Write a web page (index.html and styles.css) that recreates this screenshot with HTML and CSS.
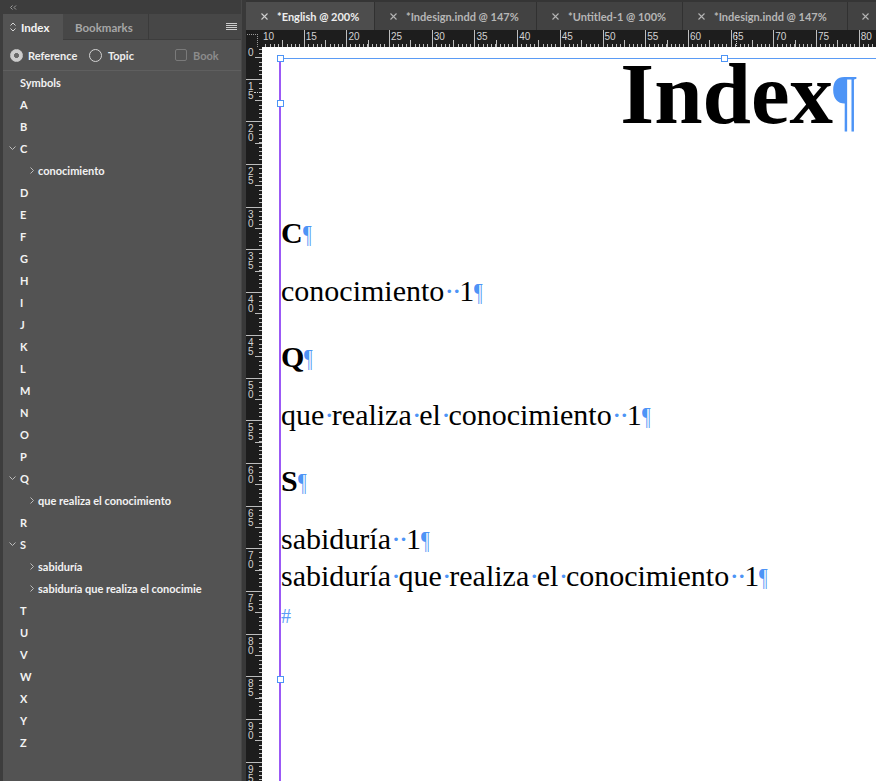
FILE: index.html
```html
<!DOCTYPE html>
<html>
<head>
<meta charset="utf-8">
<title>Index</title>
<link rel="stylesheet" href="styles.css">
</head>
<body>
<div class="app">
  <aside class="panel">
    <div class="panel-top">
      <svg class="collapse" width="8" height="5" viewBox="0 0 8 5"><path d="M3.5 0.5 L1.5 2.5 L3.5 4.5 M7 0.5 L5 2.5 L7 4.5" fill="none" stroke="#9c9c9c" stroke-width="1"/></svg>
    </div>
    <div class="panel-tabs">
      <div class="ptab active">
        <svg width="6" height="10" viewBox="0 0 6 10"><path d="M0.5 3.5 L3 1 L5.5 3.5 M0.5 6.5 L3 9 L5.5 6.5" fill="none" stroke="#d6d6d6" stroke-width="1"/></svg>
        <span>Index</span>
      </div>
      <div class="ptab bm">Bookmarks</div>
      <div class="ptab-fill">
        <svg width="11" height="8" viewBox="0 0 11 8"><path d="M0 0.5 H11 M0 2.5 H11 M0 4.5 H11 M0 6.5 H11" stroke="#cdcdcd" stroke-width="1"/></svg>
      </div>
    </div>
    <div class="radio-row">
      <div class="opt ref"><span class="radio on"></span><span>Reference</span></div>
      <div class="opt topic"><span class="radio"></span><span>Topic</span></div>
      <div class="opt book"><span class="cbox"></span><span>Book</span></div>
    </div>
    <ul class="tree">
      <li class="l1"><span class="tw"></span>Symbols</li>
      <li class="l1"><span class="tw"></span>A</li>
      <li class="l1"><span class="tw"></span>B</li>
      <li class="l1"><span class="tw"><svg width="7" height="4" viewBox="0 0 7 4"><path d="M0.5 0.5 L3.5 3.5 L6.5 0.5" fill="none" stroke="#bdbdbd"/></svg></span>C</li>
      <li class="l2"><span class="tw"><svg width="4" height="7" viewBox="0 0 4 7"><path d="M0.5 0.5 L3.5 3.5 L0.5 6.5" fill="none" stroke="#bdbdbd"/></svg></span>conocimiento</li>
      <li class="l1"><span class="tw"></span>D</li>
      <li class="l1"><span class="tw"></span>E</li>
      <li class="l1"><span class="tw"></span>F</li>
      <li class="l1"><span class="tw"></span>G</li>
      <li class="l1"><span class="tw"></span>H</li>
      <li class="l1"><span class="tw"></span>I</li>
      <li class="l1"><span class="tw"></span>J</li>
      <li class="l1"><span class="tw"></span>K</li>
      <li class="l1"><span class="tw"></span>L</li>
      <li class="l1"><span class="tw"></span>M</li>
      <li class="l1"><span class="tw"></span>N</li>
      <li class="l1"><span class="tw"></span>O</li>
      <li class="l1"><span class="tw"></span>P</li>
      <li class="l1"><span class="tw"><svg width="7" height="4" viewBox="0 0 7 4"><path d="M0.5 0.5 L3.5 3.5 L6.5 0.5" fill="none" stroke="#bdbdbd"/></svg></span>Q</li>
      <li class="l2"><span class="tw"><svg width="4" height="7" viewBox="0 0 4 7"><path d="M0.5 0.5 L3.5 3.5 L0.5 6.5" fill="none" stroke="#bdbdbd"/></svg></span>que realiza el conocimiento</li>
      <li class="l1"><span class="tw"></span>R</li>
      <li class="l1"><span class="tw"><svg width="7" height="4" viewBox="0 0 7 4"><path d="M0.5 0.5 L3.5 3.5 L6.5 0.5" fill="none" stroke="#bdbdbd"/></svg></span>S</li>
      <li class="l2"><span class="tw"><svg width="4" height="7" viewBox="0 0 4 7"><path d="M0.5 0.5 L3.5 3.5 L0.5 6.5" fill="none" stroke="#bdbdbd"/></svg></span>sabiduría</li>
      <li class="l2"><span class="tw"><svg width="4" height="7" viewBox="0 0 4 7"><path d="M0.5 0.5 L3.5 3.5 L0.5 6.5" fill="none" stroke="#bdbdbd"/></svg></span>sabiduría que realiza el conocimie</li>
      <li class="l1"><span class="tw"></span>T</li>
      <li class="l1"><span class="tw"></span>U</li>
      <li class="l1"><span class="tw"></span>V</li>
      <li class="l1"><span class="tw"></span>W</li>
      <li class="l1"><span class="tw"></span>X</li>
      <li class="l1"><span class="tw"></span>Y</li>
      <li class="l1"><span class="tw"></span>Z</li>
    </ul>
  </aside>

  <main class="main">
    <nav class="doctabs">
      <div class="dtab active w1"><svg class="x" width="7" height="7" viewBox="0 0 7 7"><path d="M0.5 0.5 L6.5 6.5 M6.5 0.5 L0.5 6.5" stroke="#cfcfcf" stroke-width="1.1"/></svg><span>*English @ 200%</span></div>
      <div class="dtab w2"><svg class="x" width="7" height="7" viewBox="0 0 7 7"><path d="M0.5 0.5 L6.5 6.5 M6.5 0.5 L0.5 6.5" stroke="#b5b5b5" stroke-width="1.1"/></svg><span>*Indesign.indd @ 147%</span></div>
      <div class="dtab w3"><svg class="x" width="7" height="7" viewBox="0 0 7 7"><path d="M0.5 0.5 L6.5 6.5 M6.5 0.5 L0.5 6.5" stroke="#b5b5b5" stroke-width="1.1"/></svg><span>*Untitled-1 @ 100%</span></div>
      <div class="dtab w4"><svg class="x" width="7" height="7" viewBox="0 0 7 7"><path d="M0.5 0.5 L6.5 6.5 M6.5 0.5 L0.5 6.5" stroke="#b5b5b5" stroke-width="1.1"/></svg><span>*Indesign.indd @ 147%</span></div>
      <div class="dtab w5"><svg class="x" width="7" height="7" viewBox="0 0 7 7"><path d="M0.5 0.5 L6.5 6.5 M6.5 0.5 L0.5 6.5" stroke="#b5b5b5" stroke-width="1.1"/></svg></div>
    </nav>

    <div class="workspace">
      <div class="corner">
        <svg width="16" height="17" viewBox="0 0 16 17"><path d="M1 4.5 H12 M11.5 4 V17" fill="none" stroke="#9a9a9a" stroke-width="1" stroke-dasharray="1 1"/></svg>
      </div>
      <div class="hruler">
        <div class="hr-cell">10</div>
        <div class="hr-cell">15</div>
        <div class="hr-cell">20</div>
        <div class="hr-cell">25</div>
        <div class="hr-cell">30</div>
        <div class="hr-cell">35</div>
        <div class="hr-cell">40</div>
        <div class="hr-cell">45</div>
        <div class="hr-cell">50</div>
        <div class="hr-cell">55</div>
        <div class="hr-cell">60</div>
        <div class="hr-cell">65</div>
        <div class="hr-cell">70</div>
        <div class="hr-cell">75</div>
        <div class="hr-cell">80</div>
        <span class="cursor-v"></span>
      </div>
      <div class="vruler">
        <div class="vr-cell"><span>1</span><span>0</span></div>
        <div class="vr-cell"><span>1</span><span>5</span></div>
        <div class="vr-cell"><span>2</span><span>0</span></div>
        <div class="vr-cell"><span>2</span><span>5</span></div>
        <div class="vr-cell"><span>3</span><span>0</span></div>
        <div class="vr-cell"><span>3</span><span>5</span></div>
        <div class="vr-cell"><span>4</span><span>0</span></div>
        <div class="vr-cell"><span>4</span><span>5</span></div>
        <div class="vr-cell"><span>5</span><span>0</span></div>
        <div class="vr-cell"><span>5</span><span>5</span></div>
        <div class="vr-cell"><span>6</span><span>0</span></div>
        <div class="vr-cell"><span>6</span><span>5</span></div>
        <div class="vr-cell"><span>7</span><span>0</span></div>
        <div class="vr-cell"><span>7</span><span>5</span></div>
        <div class="vr-cell"><span>8</span><span>0</span></div>
        <div class="vr-cell"><span>8</span><span>5</span></div>
        <div class="vr-cell"><span>9</span><span>0</span></div>
        <div class="vr-cell"><span>9</span><span>5</span></div>
        <span class="cursor-h"></span>
      </div>
      <div class="page">
        <div class="frame">
          <p class="title">Index<span class="pc">¶</span></p>
          <p class="letter">C<span class="pc">¶</span></p>
          <p class="entry">conocimiento<span class="sp">·</span><span class="sp">·</span>1<span class="pc">¶</span></p>
          <p class="letter">Q<span class="pc">¶</span></p>
          <p class="entry">que<span class="sp">·</span>realiza<span class="sp">·</span>el<span class="sp">·</span>conocimiento<span class="sp">·</span><span class="sp">·</span>1<span class="pc">¶</span></p>
          <p class="letter">S<span class="pc">¶</span></p>
          <p class="entry">sabiduría<span class="sp">·</span><span class="sp">·</span>1<span class="pc">¶</span></p>
          <p class="entry">sabiduría<span class="sp">·</span>que<span class="sp">·</span>realiza<span class="sp">·</span>el<span class="sp">·</span>conocimiento<span class="sp">·</span><span class="sp">·</span>1<span class="pc">¶</span></p>
          <p class="entry"><span class="eos">#</span></p>
        </div>
        <span class="handle h1"></span>
        <span class="handle h2"></span>
        <span class="handle h3"></span>
        <span class="handle h4"></span>
      </div>
    </div>
  </main>
</div>
</body>
</html>
```

FILE: styles.css
```css
* { box-sizing: border-box; }
html, body { margin: 0; padding: 0; }
body {
  width: 876px;
  height: 781px;
  overflow: hidden;
  background: #393939;
  font-family: Lato, "Noto Sans", "Liberation Sans", sans-serif;
}
.app { display: flex; height: 781px; }

/* ---------- left panel ---------- */
.panel {
  width: 242px;
  flex: none;
  display: flex;
  flex-direction: column;
  background: #535353;
  border-left: 3px solid #3d3d3d;
  border-right: 1px solid #474747;
}
.panel-top {
  height: 14px;
  margin-left: -3px;
  background: #3d3d3d;
  display: flex;
  align-items: center;
  padding-left: 9px;
}
.panel-tabs {
  height: 26px;
  display: flex;
  background: #474747;
}
.ptab {
  display: flex;
  align-items: center;
  font-size: 11.5px;
  font-weight: 700;
  color: #a6a6a6;
  box-shadow: inset 0 -1px #3d3d3d;
  white-space: nowrap;
}
.ptab.active {
  width: 60px;
  padding-left: 7px;
  gap: 5px;
  background: #535353;
  color: #f4f4f4;
  box-shadow: none;
}
.ptab.bm {
  width: 86px;
  padding-left: 12px;
  border-right: 1px solid #3b3b3b;
}
.ptab-fill {
  flex: 1;
  display: flex;
  justify-content: flex-end;
  align-items: center;
  padding-right: 4px;
  padding-bottom: 1px;
  box-shadow: inset 0 -1px #3d3d3d;
}
.radio-row {
  height: 31px;
  display: flex;
  align-items: center;
  padding-left: 7px;
  border-bottom: 1px solid #5f5f5f;
  font-size: 11px;
  font-weight: 700;
  color: #eeeeee;
}
.opt { display: flex; align-items: center; gap: 5px; white-space: nowrap; }
.opt.ref { width: 79px; }
.opt.topic { width: 86px; gap: 6px; }
.opt.book { color: #8c8c8c; gap: 6px; }
.radio {
  width: 13px;
  height: 13px;
  border-radius: 50%;
  border: 1px solid #d4d4d4;
}
.radio.on {
  border-color: #c9c9c9;
  background: radial-gradient(circle, #6a6a6a 0 2.2px, #cdcdcd 2.8px);
}
.cbox {
  width: 12px;
  height: 12px;
  border: 1px solid #7a7a7a;
  border-radius: 2px;
}
.tree {
  list-style: none;
  margin: 0;
  padding: 0;
  font-size: 11px;
  font-weight: 700;
  color: #f2f2f2;
}
.tree li {
  height: 22px;
  display: flex;
  align-items: center;
  white-space: nowrap;
}
.tree .l1 { padding-left: 6px; }
.tree .l1 .tw { width: 11px; }
.tree .l2 { padding-left: 27px; }
.tree .l2 .tw { width: 8px; }
.tw { display: flex; align-items: center; flex: none; height: 22px; }

/* ---------- main area ---------- */
.main {
  flex: 1;
  min-width: 0;
  margin-left: 4px;
  display: flex;
  flex-direction: column;
}
.doctabs {
  height: 30px;
  flex: none;
  display: flex;
  padding-top: 2px;
  background: #353535;
  overflow: hidden;
}
.dtab {
  flex: none;
  display: flex;
  align-items: center;
  padding-left: 15px;
  gap: 9px;
  background: #424242;
  border-right: 1px solid #313131;
  font-size: 11px;
  font-weight: 700;
  color: #b6b6b6;
  white-space: nowrap;
  overflow: hidden;
}
.dtab.active { background: #4d4d4d; color: #eeeeee; }
.dtab.w1 { width: 129px; }
.dtab.w2 { width: 162px; }
.dtab.w3 { width: 146px; }
.dtab.w4 { width: 165px; }
.dtab.w5 { width: 40px; padding-left: 14px; border-right: 0; }

.workspace {
  flex: 1;
  min-height: 0;
  display: grid;
  grid-template-columns: 16px 1fr;
  grid-template-rows: 17px 1fr;
}
.corner { background: #1d1d1d; }
.corner svg { display: block; }

.hruler {
  position: relative;
  background: #1d1d1d;
  display: flex;
  overflow: hidden;
}
.hr-cell {
  flex: none;
  width: 42.7px;
  height: 17px;
  margin-left: -1px;
  margin-right: 1px;
  border-left: 1px solid #bdbdbd;
  padding: 2px 0 0 1px;
  font: 10px/10px "Liberation Sans", Arial, sans-serif;
  color: #d2d2d2;
  background-image:
    linear-gradient(#bdbdbd, #bdbdbd),
    repeating-linear-gradient(to right, transparent 0, transparent 3.27px, #bdbdbd 3.27px, #bdbdbd 4.27px);
  background-repeat: no-repeat;
  background-position: 20.35px 100%, 0 100%;
  background-size: 1px 7px, 100% 3px;
}
.cursor-v {
  position: absolute;
  left: 474px;
  top: 2px;
  height: 14px;
  border-left: 1px dotted #cfcfcf;
}
.vruler {
  position: relative;
  background: #1d1d1d;
  overflow: hidden;
  display: flex;
  flex-direction: column;
}
.vr-cell {
  flex: none;
  height: 42.7px;
  border-top: 1px solid #bdbdbd;
  padding: 2px 0 0 2px;
  display: flex;
  flex-direction: column;
  font: 10px/9px "Liberation Sans", Arial, sans-serif;
  color: #d2d2d2;
  background-image:
    linear-gradient(#bdbdbd, #bdbdbd),
    repeating-linear-gradient(to bottom, transparent 0, transparent 3.27px, #bdbdbd 3.27px, #bdbdbd 4.27px);
  background-repeat: no-repeat;
  background-position: 100% 20.35px, 100% 0;
  background-size: 7px 1px, 3px 100%;
}
.vr-cell:first-child { margin-top: -11px; }
.cursor-h {
  position: absolute;
  left: 8px;
  top: 45px;
  width: 8px;
  border-top: 1px dotted #cfcfcf;
}

.page {
  background: #ffffff;
  position: relative;
  overflow: hidden;
  display: flex;
  flex-direction: column;
  min-height: 0;
}
.frame {
  flex: 1;
  margin: 11px 0 0 17px;
  border-top: 1px solid #5a9bf5;
  border-left: 2px solid #9b59f6;
  display: flex;
  flex-direction: column;
  font-family: "Liberation Serif", "DejaVu Serif", serif;
  color: #000000;
}
.frame p { margin: 0; white-space: nowrap; }
.frame .title {
  margin-bottom: 56px;
  font-size: 87px;
  font-weight: 700;
  line-height: 70px;
  text-align: right;
  padding-right: 19px;
}
.frame .letter {
  margin: 29px 0 21px;
  font-size: 30px;
  font-weight: 700;
  line-height: 37px;
}
.frame .entry {
  font-size: 30px;
  line-height: 37px;
}
.pc {
  display: inline-block;
  color: #4d94f6;
  font-weight: 400;
  font-size: 0.84em;
  line-height: 0;
  transform: scaleX(0.76);
  transform-origin: 0 0;
  margin-right: -0.11em;
}
.title .pc { font-size: 0.8em; }
.sp {
  display: inline-block;
  width: 0.25em;
  text-align: center;
  color: #4d94f6;
  line-height: 0;
}
.eos { color: #5b9cf6; font-size: 20px; line-height: 0; }

.handle {
  position: absolute;
  width: 7px;
  height: 7px;
  background: #ffffff;
  border: 1px solid #4d94f6;
}
.h1 { left: 15px; top: 8px; }
.h2 { left: 15px; top: 53px; }
.h3 { left: 15px; top: 629px; }
.h4 { left: 459px; top: 8px; }
```
